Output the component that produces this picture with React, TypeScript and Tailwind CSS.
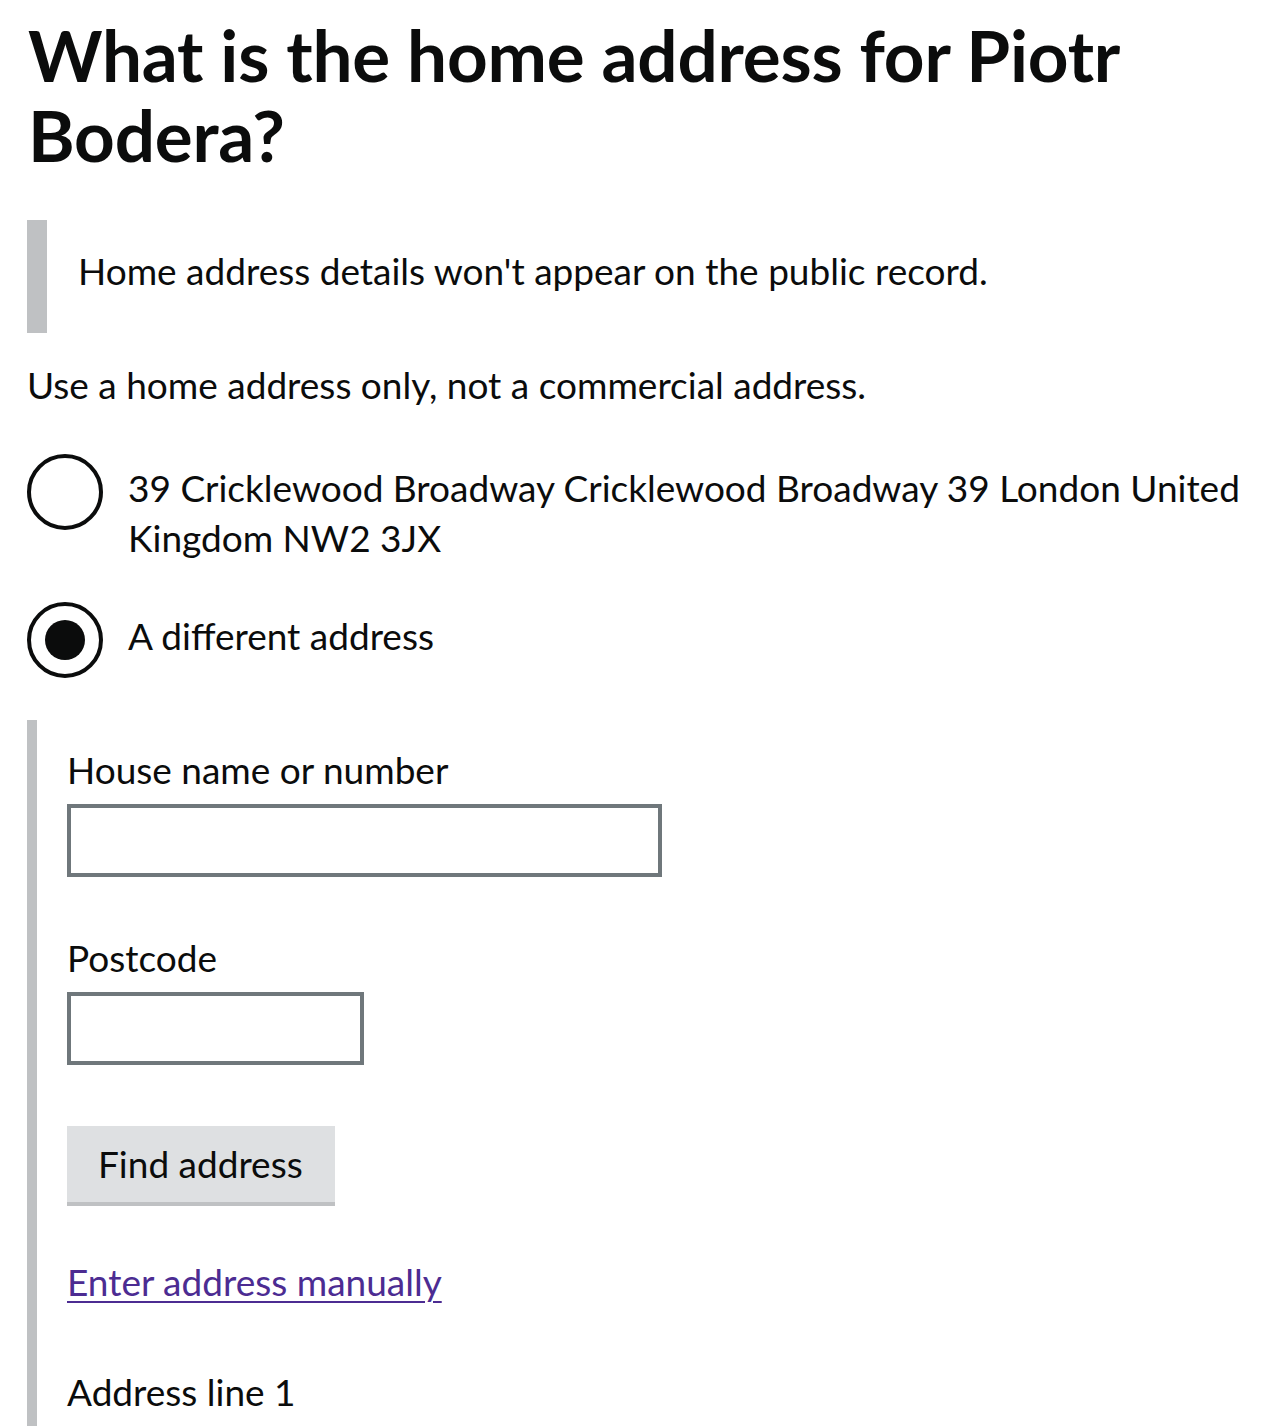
import React from "react";

export default function App() {
  return (
    <div className="min-h-screen bg-white px-[27px] pt-[15px] text-[#0b0c0c] font-['Lato',sans-serif]">
      <h1 className="text-[71px] font-bold leading-[80px] tracking-[-0.2px] pl-[1px]">
        What is the home address for Piotr Bodera?
      </h1>

      <div className="mt-[45px] border-l-[20px] border-[#bfc1c3] pl-[31px] pt-[26px] pb-[37px]">
        <p className="text-[37px] leading-[50px]">Home address details won't appear on the public record.</p>
      </div>

      <p className="mt-[27px] text-[37px] leading-[50px]">Use a home address only, not a commercial address.</p>

      <div className="mt-[44px]">
        <label className="flex items-start mb-[28px]">
          <span className="shrink-0 w-[76px] h-[76px] rounded-full border-[4px] border-[#0b0c0c] bg-white" />
          <span className="pl-[25px] pt-[9px] pb-[11px] text-[37px] leading-[50px]">
            39 Cricklewood Broadway Cricklewood Broadway 39 London United Kingdom NW2 3JX
          </span>
        </label>
        <label className="flex items-start">
          <span className="shrink-0 w-[76px] h-[76px] rounded-full border-[4px] border-[#0b0c0c] bg-white flex items-center justify-center">
            <span className="w-[40px] h-[40px] rounded-full bg-[#0b0c0c]" />
          </span>
          <span className="pl-[25px] pt-[9px] text-[37px] leading-[50px]">A different address</span>
        </label>
      </div>

      <div className="mt-[42px] border-l-[10px] border-[#bfc1c3] pl-[30px] pt-[25px] pb-[10px]">
        <div className="text-[37px] leading-[50px]">House name or number</div>
        <div className="mt-[9px] w-[595px] h-[73px] border-[4px] border-[#6f777b] bg-white" />

        <div className="mt-[56px] text-[37px] leading-[50px]">Postcode</div>
        <div className="mt-[9px] w-[297px] h-[73px] border-[4px] border-[#6f777b] bg-white" />

        <button className="mt-[61px] block w-[268px] h-[76px] bg-[#dee0e2] shadow-[0_4px_0_#bfc1c3] text-[37px] leading-[50px] text-[#0b0c0c] text-left pl-[31px]">
          Find address
        </button>

        <div className="mt-[55px] text-[37px] leading-[50px]">
          <a href="#" className="text-[#4c2c92] underline decoration-[2px] underline-offset-[5px]">
            Enter address manually
          </a>
        </div>

        <div className="mt-[60px] text-[37px] leading-[50px]">Address line 1</div>
      </div>
    </div>
  );
}
